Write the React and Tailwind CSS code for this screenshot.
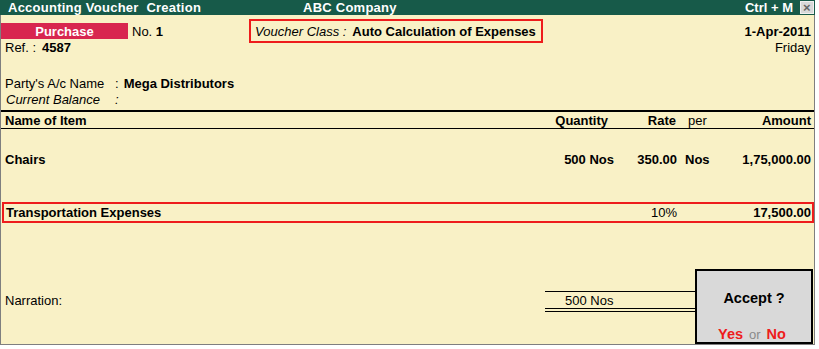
import React from 'react';

const FONT = { fontFamily: '"Liberation Sans", Arial, sans-serif' };

function ItemRow({ name, qty, rate, per, amount, className = '' }) {
  return (
    <div className={`flex items-center h-[16px] pr-[3px] font-bold ${className}`}>
      <div className="flex-1 pl-[4px]">{name}</div>
      <div className="w-[100px] text-right">{qty}</div>
      <div className="w-[63px] text-right">{rate}</div>
      <div className="w-[48px] pl-[8px]">{per}</div>
      <div className="w-[86px] text-right">{amount}</div>
    </div>
  );
}

export default function App() {
  return (
    <div className="w-[819px] h-[349px] bg-white text-[13px] text-black leading-none" style={FONT}>
      <div className="relative w-[815px] h-[345px] flex flex-col">
        {/* Title bar */}
        <div className="h-[15px] bg-[#175a49] text-white font-bold flex items-center tracking-[0.25px] shrink-0">
          <span className="pl-[8px] w-[303px] whitespace-pre">Accounting Voucher  Creation</span>
          <span className="flex-1">ABC Company</span>
          <span className="pr-[7px] tracking-normal">Ctrl + M</span>
          <span className="w-[14px] h-[13px] mr-[1px] bg-[#d9d9d9] border border-[#f0f0f0] text-[#666] text-[13px] flex items-center justify-center font-bold">
            ×
          </span>
        </div>

        {/* Body */}
        <div className="flex-1 bg-[#f9f1c6] border-l border-r border-b border-[#7f7f7f] flex flex-col">
          {/* Header block */}
          <div className="flex items-start pt-[8px]">
            <div className="flex flex-col">
              <div className="flex items-center h-[16px]">
                <div className="w-[127px] h-[16px] bg-[#d8264f] text-white font-bold flex items-center justify-center">
                  Purchase
                </div>
                <span className="ml-[4px]">
                  No. <b>1</b>
                </span>
              </div>
              <div className="flex items-center h-[16px] pl-[4px]">
                <span>Ref. :</span>
                <b className="ml-[6px]">4587</b>
              </div>
            </div>
            <div className="ml-[86px] -mt-[4px] w-[294px] h-[24px] border-2 border-[#ee1c1c] flex items-center pl-[4px]">
              <i>Voucher Class :</i>
              <b className="ml-[6px]">Auto Calculation of Expenses</b>
            </div>
            <div className="flex-1 flex flex-col items-end pr-[3px]">
              <b className="h-[16px] flex items-center">1-Apr-2011</b>
              <span className="h-[16px] flex items-center">Friday</span>
            </div>
          </div>

          {/* Party */}
          <div className="mt-[20px] pl-[4px]">
            <div className="flex items-center h-[16px]">
              <span className="w-[110px]">Party's A/c Name</span>
              <span>:</span>
              <b className="ml-[5px]">Mega Distributors</b>
            </div>
            <div className="flex items-center h-[16px] italic">
              <span className="w-[110px] pl-[1px]">Current Balance</span>
              <span>:</span>
            </div>
          </div>

          {/* Items table */}
          <div className="mt-[3px] h-[2px] bg-black" />
          <div className="flex items-center h-[17px] pt-[1px] pr-[3px] font-bold border-b border-black">
            <div className="flex-1 pl-[4px]">Name of Item</div>
            <div className="w-[100px] text-right pr-[6px]">Quantity</div>
            <div className="w-[63px] text-right pr-[1px]">Rate</div>
            <div className="w-[48px] pl-[11px] font-normal">per</div>
            <div className="w-[86px] text-right">Amount</div>
          </div>

          <ItemRow className="mt-[22px]" name="Chairs" qty="500 Nos" rate="350.00" per="Nos" amount="1,75,000.00" />

          <div className="mt-[35px] ml-[1px] h-[21px] border-2 border-[#ee1c1c] flex items-center pr-[1px] font-bold">
            <div className="flex-1 pl-[2px]">Transportation Expenses</div>
            <div className="w-[100px]" />
            <div className="w-[63px] text-right font-normal">10%</div>
            <div className="w-[48px]" />
            <div className="w-[86px] text-right">17,500.00</div>
          </div>

          {/* Narration */}
          <div className="mt-[68px] flex">
            <div className="w-[544px] flex items-end h-[17px] pl-[4px]">
              <span className="h-[16px] flex items-center">Narration:</span>
            </div>
            <div className="w-[160px] flex flex-col">
              <div className="h-[1px] bg-black" />
              <div className="h-[16px] flex items-center pl-[20px]">500 Nos</div>
              <div className="h-[1px] bg-black" />
              <div className="h-[2px]" />
              <div className="h-[1px] bg-black" />
            </div>
          </div>
        </div>

        {/* Accept dialog */}
        <div className="absolute left-[695px] top-[269px] w-[118px] h-[75px] bg-[#d9d9d9] border-2 border-black flex flex-col items-center text-[14.5px]">
          <b className="mt-[19px] h-[16px] flex items-center">Accept ?</b>
          <div className="mt-[20px] h-[16px] flex items-center gap-[6px] pr-[4px]">
            <b className="text-[#ee1c1c]">Yes</b>
            <span className="text-[#8a8a8a] text-[13px]">or</span>
            <b className="text-[#ee1c1c]">No</b>
          </div>
        </div>
      </div>
    </div>
  );
}
